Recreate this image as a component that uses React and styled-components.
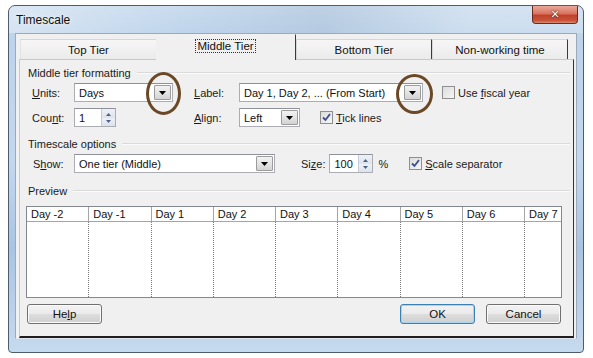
import styled, { createGlobalStyle } from 'styled-components';

const GlobalStyle = createGlobalStyle`
  html, body {
    margin: 0;
    background: #ffffff;
  }
  body {
    font-family: "Liberation Sans", Arial, sans-serif;
    font-size: 11px;
    color: #000;
  }
`;

const days = ['Day -2', 'Day -1', 'Day 1', 'Day 2', 'Day 3', 'Day 4', 'Day 5', 'Day 6', 'Day 7'];

const tabs = [
  { label: 'Top Tier', width: 136 },
  { label: 'Middle Tier', width: 140, active: true },
  { label: 'Bottom Tier', width: 136 },
  { label: 'Non-working time', width: 136 }
];

const DropArrow = () => (
  <svg width="7" height="4" viewBox="0 0 7 4">
    <path d="M0 0 H7 L3.5 4 Z" fill="#000" />
  </svg>
);

const SpinArrows = () => (
  <svg width="7" height="12" viewBox="0 0 7 12">
    <path d="M3.5 1 L6 4 H1 Z" fill="#4d6185" />
    <path d="M3.5 11 L6 8 H1 Z" fill="#4d6185" />
  </svg>
);

const CheckMark = () => (
  <svg width="9" height="9" viewBox="0 0 9 9">
    <path d="M1 4.5 L3.5 7 L8 1" fill="none" stroke="#3b4f8c" strokeWidth="1.8" />
  </svg>
);

const Dropdown = ({ value, width, circle }) => (
  <SelectBox $width={width}>
    <SelectText>{value}</SelectText>
    <DropButton>
      <DropArrow />
    </DropButton>
    {circle && <Annotation $circle={circle} />}
  </SelectBox>
);

const Spinner = ({ value, width }) => (
  <SpinBox $width={width}>
    <SelectText>{value}</SelectText>
    <SpinButton>
      <SpinArrows />
    </SpinButton>
  </SpinBox>
);

const Check = ({ checked, children }) => (
  <CheckLabel>
    <CheckBox>{checked && <CheckMark />}</CheckBox>
    <span>{children}</span>
  </CheckLabel>
);

const App = () => {
  return (
    <>
      <GlobalStyle />
      <Window>
        <TitleBar>
          <Title>Timescale</Title>
          <CloseButton>✕</CloseButton>
        </TitleBar>
        <Frame>
          <Content>
            <TabStrip>
              {tabs.map((t) => (
                <Tab key={t.label} $width={t.width} $active={t.active}>
                  {t.active ? <Focus>{t.label}</Focus> : t.label}
                </Tab>
              ))}
            </TabStrip>
            <Panel>
              <GroupHeader>Middle tier formatting</GroupHeader>
              <FormGrid>
                <FieldLabel><u>U</u>nits:</FieldLabel>
                <Dropdown value="Days" width={99} circle={{ left: 71, top: -12, w: 35, h: 43 }} />
                <FieldLabel><u>L</u>abel:</FieldLabel>
                <Inline $gap={19}>
                  <Dropdown
                    value="Day 1, Day 2, ... (From Start)"
                    width={184}
                    circle={{ left: 156, top: -10, w: 37, h: 40 }}
                  />
                  <Check>Use <u>f</u>iscal year</Check>
                </Inline>

                <FieldLabel>Cou<u>n</u>t:</FieldLabel>
                <Spinner value="1" width={42} />
                <FieldLabel><u>A</u>lign:</FieldLabel>
                <Inline $gap={20}>
                  <Dropdown value="Left" width={61} />
                  <Check checked><u>T</u>ick lines</Check>
                </Inline>
              </FormGrid>

              <GroupHeader $top={10}>Timescale options</GroupHeader>
              <ShowRow>
                <FieldLabel>S<u>h</u>ow:</FieldLabel>
                <Dropdown value="One tier (Middle)" width={201} />
                <SizeLabel>Si<u>z</u>e:</SizeLabel>
                <Spinner value="100" width={44} />
                <Percent>%</Percent>
                <Check checked><u>S</u>cale separator</Check>
              </ShowRow>

              <GroupHeader $top={11}>Preview</GroupHeader>
              <PreviewTable>
                {days.map((d, i) => (
                  <HeadCell key={d} $last={i === days.length - 1}>{d}</HeadCell>
                ))}
                {days.map((d, i) => (
                  <BodyCell key={d} $last={i === days.length - 1} />
                ))}
              </PreviewTable>

              <ButtonRow>
                <Button>He<u>l</u>p</Button>
                <Spacer />
                <Button $default>OK</Button>
                <Button>Cancel</Button>
              </ButtonRow>
            </Panel>
          </Content>
        </Frame>
      </Window>
    </>
  );
};

const Window = styled.div`
  margin: 5px 0 0 8px;
  width: 576px;
  height: 348px;
  box-sizing: border-box;
  border: 1px solid #4f5c6b;
  border-radius: 7px 7px 4px 4px;
  background: linear-gradient(180deg, #cadcee 0%, #bcd3eb 10%, #c3d8ee 45%, #a9c4e2 70%, #c6daef 100%);
  display: flex;
  flex-direction: column;
  overflow: hidden;
`;

const TitleBar = styled.div`
  height: 27px;
  display: flex;
  align-items: flex-start;
  padding: 0 5px 0 7px;
  background: linear-gradient(90deg, rgba(255,255,255,0.35), rgba(255,255,255,0) 30%, rgba(150,170,195,0.25) 55%, rgba(255,255,255,0.2) 80%);
`;

const Title = styled.div`
  flex: 1;
  margin-top: 7px;
  font-size: 12px;
  color: #111;
  text-shadow: 0 0 6px rgba(255, 255, 255, 0.9);
`;

const CloseButton = styled.div`
  width: 46px;
  height: 18px;
  box-sizing: border-box;
  border: 1px solid #6a2b20;
  border-top: none;
  border-radius: 0 0 4px 4px;
  background: linear-gradient(180deg, #e9a99b 0%, #d9735f 45%, #c0412a 55%, #c9533a 85%, #dc8a70 100%);
  color: #fff;
  font-family: "DejaVu Sans", sans-serif;
  font-size: 11px;
  font-weight: bold;
  display: flex;
  align-items: center;
  justify-content: center;
  text-shadow: 0 0 2px #4a1a10, 0 0 1px #4a1a10;
`;

const Frame = styled.div`
  flex: 1;
  display: flex;
  padding: 0 6px 13px 6px;
`;

const Content = styled.div`
  flex: 1;
  display: flex;
  flex-direction: column;
  background: #f0f0f0;
  border: 1px solid #9aaabb;
  border-bottom: 1px solid #dfe6ee;
  padding: 0 2px 0 3px;
`;

const TabStrip = styled.div`
  display: flex;
  height: 25px;
  padding-left: 1px;
  align-items: flex-end;
`;

const Tab = styled.div`
  width: ${(p) => p.$width}px;
  box-sizing: border-box;
  height: ${(p) => (p.$active ? 26 : 20)}px;
  margin-bottom: ${(p) => (p.$active ? -1 : 0)}px;
  display: flex;
  align-items: ${(p) => (p.$active ? 'flex-start' : 'center')};
  justify-content: center;
  padding-top: ${(p) => (p.$active ? 5 : 0)}px;
  font-size: 11.5px;
  color: #111;
  position: relative;
  z-index: ${(p) => (p.$active ? 1 : 0)};
  background: ${(p) => (p.$active ? '#f0f0f0' : 'linear-gradient(180deg, #f6f6f6, #ebebeb)')};
  border: 1px solid #d6d6d6;
  border-right: 1px solid #3a3a3a;
  border-bottom: none;
  &:first-child {
    border-right: none;
    border-left: 1px solid #e2e2e2;
  }
  ${(p) => p.$active && 'border-left: none; border-top: 1px solid #f0f0f0;'}
`;

const Focus = styled.span`
  outline: 1px dotted #333;
  outline-offset: 0;
  padding: 0 1px;
`;

const Panel = styled.div`
  flex: 1;
  display: flex;
  flex-direction: column;
  border: 1px solid #c9c9c9;
  border-right: 1px solid #333;
  border-bottom: 2px solid #1e1e1e;
  padding: 0 11px 0 8px;
`;

const GroupHeader = styled.div`
  display: flex;
  align-items: center;
  gap: 6px;
  height: 13px;
  margin-top: ${(p) => p.$top ?? 6}px;
  color: #1a1a1a;
  &::after {
    content: '';
    flex: 1;
    height: 0;
    border-top: 1px solid #dadada;
    border-bottom: 1px solid #fbfbfb;
    margin-right: -8px;
  }
`;

const FormGrid = styled.div`
  display: grid;
  grid-template-columns: 42px 120px 45px auto;
  grid-template-rows: 19px 19px;
  row-gap: 6px;
  align-items: center;
  margin: 4px 0 0 4px;
`;

const FieldLabel = styled.span`
  color: #1a1a1a;
  white-space: nowrap;
`;

const Inline = styled.div`
  display: flex;
  align-items: center;
  gap: ${(p) => p.$gap}px;
`;

const SelectBox = styled.div`
  position: relative;
  width: ${(p) => p.$width}px;
  height: 19px;
  box-sizing: border-box;
  border: 1px solid #abadb3;
  border-top-color: #8e9199;
  background: #fff;
  display: flex;
  align-items: center;
  justify-content: space-between;
  padding: 0 1px 0 4px;
`;

const SelectText = styled.span`
  white-space: nowrap;
  color: #111;
`;

const DropButton = styled.div`
  width: 17px;
  height: 15px;
  box-sizing: border-box;
  border: 1px solid #9c9c9c;
  border-radius: 1px;
  background: linear-gradient(180deg, #f2f2f2 0%, #e4e4e4 50%, #d3d3d3 100%);
  display: flex;
  align-items: center;
  justify-content: center;
`;

const Annotation = styled.div`
  position: absolute;
  left: ${(p) => p.$circle.left}px;
  top: ${(p) => p.$circle.top}px;
  width: ${(p) => p.$circle.w}px;
  height: ${(p) => p.$circle.h}px;
  box-sizing: border-box;
  border: 3px solid #6b4826;
  border-radius: 50%;
  pointer-events: none;
`;

const SpinBox = styled(SelectBox)`
  padding-right: 0;
`;

const SpinButton = styled.div`
  width: 14px;
  height: 17px;
  box-sizing: border-box;
  border-left: 1px solid #c4cbd6;
  background: linear-gradient(180deg, #eef2f7 0%, #dde4ee 50%, #eef2f7 51%, #dce3ed 100%);
  display: flex;
  align-items: center;
  justify-content: center;
`;

const CheckLabel = styled.label`
  display: flex;
  align-items: center;
  gap: 3px;
  color: #1a1a1a;
  white-space: nowrap;
`;

const CheckBox = styled.span`
  width: 13px;
  height: 13px;
  box-sizing: border-box;
  border: 1px solid #8f8f8f;
  background: linear-gradient(135deg, #dcdcdc, #f6f6f6);
  display: flex;
  align-items: center;
  justify-content: center;
`;

const ShowRow = styled.div`
  display: flex;
  align-items: center;
  height: 19px;
  margin: 4px 0 0 5px;
  & > ${FieldLabel} {
    width: 41px;
  }
`;

const SizeLabel = styled.span`
  margin: 0 4px 0 26px;
  color: #1a1a1a;
`;

const Percent = styled.span`
  margin: 0 21px 0 5px;
  color: #1a1a1a;
`;

const PreviewTable = styled.div`
  display: grid;
  grid-template-columns: repeat(8, 62.25px) 1fr;
  grid-template-rows: 15px 75px;
  width: 536px;
  box-sizing: border-box;
  margin: 9px 0 0 -2px;
  border: 1px solid #828790;
  background: #fff;
`;

const HeadCell = styled.div`
  border-right: ${(p) => (p.$last ? 'none' : '1px solid #a5a5a5')};
  border-bottom: 1px solid #a5a5a5;
  padding-left: 4px;
  line-height: 14px;
  color: #111;
  white-space: nowrap;
  overflow: hidden;
`;

const BodyCell = styled.div`
  border-right: ${(p) => (p.$last ? 'none' : '1px dotted #7a7a7a')};
`;

const ButtonRow = styled.div`
  display: flex;
  gap: 11px;
  margin: 6px 0 0 -1px;
  padding-right: 1px;
`;

const Spacer = styled.div`
  flex: 1;
`;

const Button = styled.div`
  width: 75px;
  height: 20px;
  box-sizing: border-box;
  border: 1px solid ${(p) => (p.$default ? '#3c7fb1' : '#707070')};
  border-radius: 3px;
  background: linear-gradient(180deg, #f2f2f2 0%, #ebebeb 48%, #dddddd 52%, #cfcfcf 100%);
  box-shadow: ${(p) => (p.$default ? 'inset 0 0 0 1px #a7d4f0' : 'inset 0 0 0 1px #fbfbfb')};
  display: flex;
  align-items: center;
  justify-content: center;
  color: #111;
  font-size: 11.5px;
`;

export default App;
